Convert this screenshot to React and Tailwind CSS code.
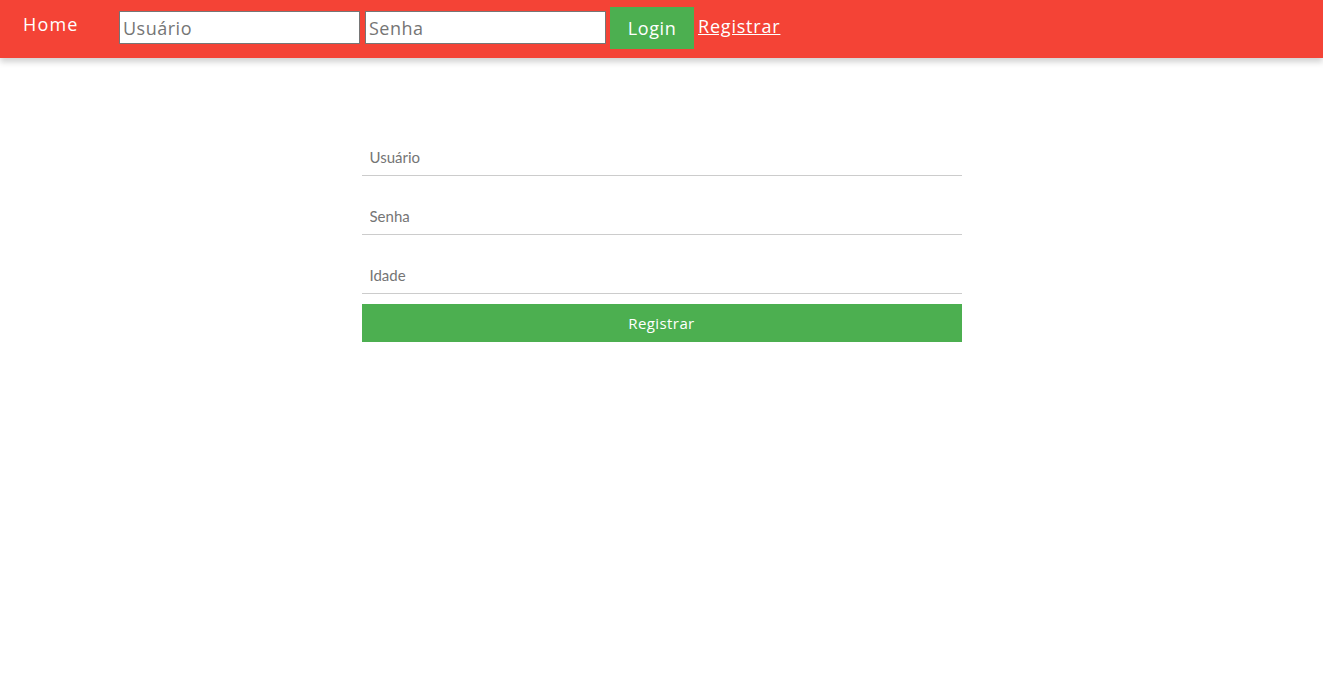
import React from 'react';

function Header() {
  return (
    <div className="h-[58px] bg-[#f44336] shadow-[0_4px_6px_rgba(0,0,0,0.18)] flex items-start font-['Open_Sans',sans-serif] text-white">
      <a className="ml-[23px] mt-[11px] text-[18px] leading-[26px] tracking-[1.2px] w-[96px]">Home</a>
      <input
        placeholder="Usuário"
        className="mt-[11px] w-[241px] h-[33px] bg-white border border-[#767676] px-[3px] text-[18px] tracking-[0.5px] text-[#333] placeholder:text-[#757575] outline-none"
      />
      <input
        placeholder="Senha"
        className="mt-[11px] ml-[5px] w-[241px] h-[33px] bg-white border border-[#767676] px-[3px] text-[18px] tracking-[0.5px] text-[#333] placeholder:text-[#757575] outline-none"
      />
      <button className="mt-[7px] ml-[4px] w-[84px] h-[42px] bg-[#4caf50] text-[18px] tracking-[0.6px] text-white">Login</button>
      <a className="mt-[13px] ml-[4px] text-[18px] leading-[26px] tracking-[0.8px] underline">Registrar</a>
    </div>
  );
}

function RegisterForm() {
  const inputClass =
    "w-full h-[35px] mt-[24px] pb-[3px] border-b border-[#cccccc] px-[8px] text-[15px] text-[#333] placeholder:text-[#757575] outline-none font-['Lato',sans-serif]";
  return (
    <div className="w-[600px] mx-auto pt-[59px] flex flex-col">
      <input placeholder="Usuário" className={inputClass} />
      <input placeholder="Senha" type="password" className={inputClass} />
      <input placeholder="Idade" className={inputClass} />
      <button className="mt-[10px] h-[38px] w-full bg-[#4caf50] text-white text-[15px] tracking-[0.4px] font-['Open_Sans',sans-serif]">
        Registrar
      </button>
    </div>
  );
}

export default function App() {
  return (
    <div className="min-h-screen bg-white">
      <Header />
      <RegisterForm />
    </div>
  );
}
